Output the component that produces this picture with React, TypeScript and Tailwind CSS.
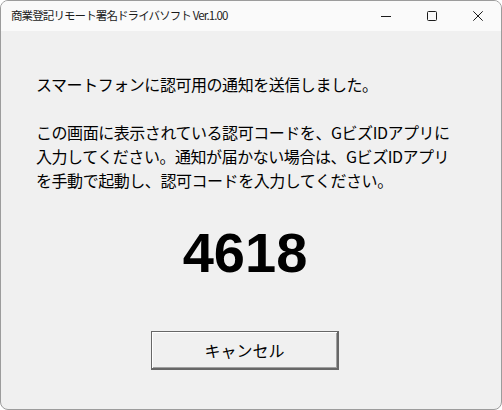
import React from "react";

const jp = "font-['Noto_Sans_CJK_JP','Noto_Sans',sans-serif]";

function WinButton({ kind }: { kind: "min" | "max" | "close" }) {
  return (
    <div className="w-[46px] h-full flex items-center justify-center">
      <svg width="10" height="10" viewBox="0 0 10 10" fill="none" stroke="#1b1b1b" strokeWidth="1">
        {kind === "min" && <path d="M0 5.5h10" />}
        {kind === "max" && <rect x="0.5" y="0.5" width="9" height="9" rx="1" />}
        {kind === "close" && <path d="M0.3 0.3l9.4 9.4M9.7 0.3l-9.4 9.4" />}
      </svg>
    </div>
  );
}

export default function App() {
  const cancel = () => {
    console.log("cancel");
  };

  return (
    <div className="w-[502px] h-[410px] bg-white">
      <div className="w-full h-full flex flex-col bg-[#f0f0f0] border border-[#9c9c9c] rounded-[8px] overflow-hidden">
        {/* title bar */}
        <div className="h-[30px] shrink-0 flex items-center bg-[#fafafa]">
          <div className={`pl-[10px] flex-1 text-[11.5px] tracking-[-0.9px] text-[#1a1a1a] ${jp}`}>
            商業登記リモート署名ドライバソフト Ver.1.00
          </div>
          <div className="flex h-full">
            <WinButton kind="min" />
            <WinButton kind="max" />
            <WinButton kind="close" />
          </div>
        </div>

        {/* message */}
        <div className={`pt-[41px] px-[35px] text-[16px] leading-[24px] tracking-[-0.45px] text-black ${jp}`}>
          <p>スマートフォンに認可用の通知を送信しました。</p>
          <p className="mt-[24px]">
            この画面に表示されている認可コードを、GビズIDアプリに
            <br />
            入力してください。通知が届かない場合は、GビズIDアプリ
            <br />
            を手動で起動し、認可コードを入力してください。
          </p>
        </div>

        <div className="pr-[12px] flex flex-col items-center">
          <div className="mt-[33px] text-[56px] leading-[56px] font-bold text-black font-['Liberation_Sans',Arial,sans-serif]">
            4618
          </div>
          <button
            onClick={cancel}
            className={`mt-[50px] w-[188px] h-[39px] flex items-center justify-center bg-[#f0f0f0] border border-[#676767] border-r-2 border-b-2 shadow-[inset_1px_1px_0_#ffffff,inset_-1px_-1px_0_#a0a0a0] text-[16px] text-black ${jp}`}
          >
            キャンセル
          </button>
        </div>
      </div>
    </div>
  );
}
